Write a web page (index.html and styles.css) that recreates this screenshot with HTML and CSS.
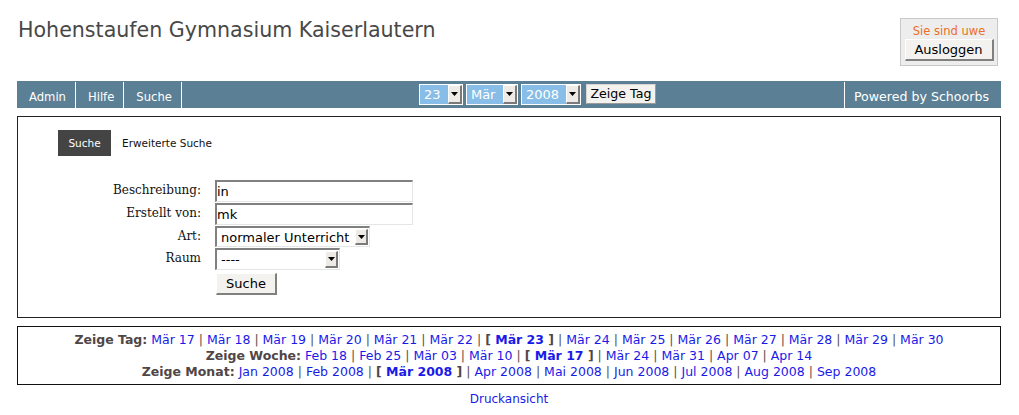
FILE: index.html
```html
<!DOCTYPE html>
<html lang="de">
<head>
<meta charset="utf-8">
<title>Hohenstaufen Gymnasium Kaiserlautern</title>
<link rel="stylesheet" href="styles.css">
</head>
<body>
<div class="page">
  <header class="header">
    <h1 class="title">Hohenstaufen Gymnasium Kaiserlautern</h1>
    <div class="login">
      <div class="login-name">Sie sind uwe</div>
      <button class="btn btn-logout" type="button">Ausloggen</button>
    </div>
  </header>

  <nav class="navbar">
    <ul class="nav-left">
      <li class="nav-item">Admin</li>
      <li class="nav-item">Hilfe</li>
      <li class="nav-item">Suche</li>
    </ul>
    <form class="datepick">
      <div class="dsel dsel-day"><span class="dsel-val">23</span><span class="dsel-arrow"><svg width="7" height="4" viewBox="0 0 7 4"><path d="M0 0h7L3.5 4z" fill="#000"/></svg></span></div>
      <div class="dsel dsel-month"><span class="dsel-val">Mär</span><span class="dsel-arrow"><svg width="7" height="4" viewBox="0 0 7 4"><path d="M0 0h7L3.5 4z" fill="#000"/></svg></span></div>
      <div class="dsel dsel-year"><span class="dsel-val">2008</span><span class="dsel-arrow"><svg width="7" height="4" viewBox="0 0 7 4"><path d="M0 0h7L3.5 4z" fill="#000"/></svg></span></div>
      <button class="btn btn-show" type="button">Zeige Tag</button>
    </form>
    <div class="powered">Powered by Schoorbs</div>
  </nav>

  <main class="panel">
    <div class="tabs">
      <span class="tab tab-active">Suche</span>
      <span class="tab">Erweiterte Suche</span>
    </div>
    <div class="search-form">
      <label class="f-label">Beschreibung:</label>
      <div class="f-field"><span class="inp inp-text">in</span></div>
      <label class="f-label">Erstellt von:</label>
      <div class="f-field"><span class="inp inp-text">mk</span></div>
      <label class="f-label">Art:</label>
      <div class="f-field"><span class="inp sel sel-art"><span class="sel-val">normaler Unterricht</span><span class="sel-arrow"><svg width="7" height="4" viewBox="0 0 7 4"><path d="M0 0h7L3.5 4z" fill="#000"/></svg></span></span></div>
      <label class="f-label">Raum</label>
      <div class="f-field"><span class="inp sel sel-room"><span class="sel-val">----</span><span class="sel-arrow"><svg width="7" height="4" viewBox="0 0 7 4"><path d="M0 0h7L3.5 4z" fill="#000"/></svg></span></span></div>
      <span class="f-label"></span>
      <div class="f-field"><button class="btn btn-search" type="button">Suche</button></div>
    </div>
  </main>

  <div class="datelinks">
    <div class="dl-row"><b class="dl-label">Zeige Tag:</b> <a>Mär 17</a> | <a>Mär 18</a> | <a>Mär 19</a> | <a>Mär 20</a> | <a>Mär 21</a> | <a>Mär 22</a> | <b class="cur">[ <a>Mär 23</a> ]</b> | <a>Mär 24</a> | <a>Mär 25</a> | <a>Mär 26</a> | <a>Mär 27</a> | <a>Mär 28</a> | <a>Mär 29</a> | <a>Mär 30</a></div>
    <div class="dl-row"><b class="dl-label">Zeige Woche:</b> <a>Feb 18</a> | <a>Feb 25</a> | <a>Mär 03</a> | <a>Mär 10</a> | <b class="cur">[ <a>Mär 17</a> ]</b> | <a>Mär 24</a> | <a>Mär 31</a> | <a>Apr 07</a> | <a>Apr 14</a></div>
    <div class="dl-row"><b class="dl-label">Zeige Monat:</b> <a>Jan 2008</a> | <a>Feb 2008</a> | <b class="cur">[ <a>Mär 2008</a> ]</b> | <a>Apr 2008</a> | <a>Mai 2008</a> | <a>Jun 2008</a> | <a>Jul 2008</a> | <a>Aug 2008</a> | <a>Sep 2008</a></div>
  </div>

  <div class="print"><a>Druckansicht</a></div>
</div>
</body>
</html>
```

FILE: styles.css
```css
* { box-sizing: border-box; }
html, body { margin: 0; padding: 0; background: #fff; }
body { font-family: "DejaVu Sans", Verdana, sans-serif; color: #000; }

.page { padding: 0 18px 0 17px; }

/* header */
.header { display: flex; justify-content: space-between; align-items: flex-start; height: 81px; }
.title {
  margin: 18px 0 0 1px;
  font-size: 20.6px; line-height: 24px; font-weight: normal; color: #484848;
}
.login {
  margin: 18px 3px 0 0;
  width: 98px; height: 48px;
  background: #ededed; border: 1px solid #c9c9c9;
  padding: 4px 4px 0 4px;
  display: flex; flex-direction: column; align-items: center;
}
.login-name { font-size: 11.5px; line-height: 16px; color: #ea6f28; }

.btn {
  font-family: "DejaVu Sans", Verdana, sans-serif;
  background: #f4f2ee; color: #000;
  border-style: solid; border-width: 1px 2px 2px 1px;
  border-color: #fff #808080 #808080 #fff;
  padding: 0; margin: 0; cursor: default;
}
.btn-logout { width: 89px; height: 22px; font-size: 13px; line-height: 18px; }

/* nav bar */
.navbar {
  display: flex; align-items: stretch;
  height: 27px; background: #5b7f95; color: #fff;
}
.nav-left { display: flex; list-style: none; margin: 0; padding: 0; }
.nav-item {
  font-size: 11.6px; line-height: 24px; padding: 3px 9px 0 12px;
  border-right: 1px solid #fff; margin-top: 1px;
}
.datepick {
  flex: 1; display: flex; justify-content: center; align-items: flex-start;
  padding: 3px 0 0 49px; margin: 0;
}
.dsel {
  display: flex; height: 21px; border: 1px solid #fff;
  background: #87bde6; margin-right: 3px;
}
.dsel-day { width: 44px; }
.dsel-month { width: 52px; }
.dsel-year { width: 60px; margin-right: 5px; }
.dsel-val { flex: 1; font-size: 13px; line-height: 19px; padding-left: 4px; color: #fff; }
.dsel-arrow, .sel-arrow {
  width: 14px; display: flex; align-items: center; justify-content: center;
  background: #eeebe6;
  border-style: solid; border-width: 1px 2px 2px 1px;
  border-color: #fff #7a7a7a #7a7a7a #fff;
}
.btn-show { width: 70px; height: 20px; font-size: 12.6px; line-height: 16px; border-width: 1px; border-color: #d8d6d2 #9a9a9a #9a9a9a #d8d6d2; }
.powered {
  font-size: 12.6px; line-height: 24px; padding: 3px 12px 0 9px;
  border-left: 1px solid #fff; margin-top: 1px;
}

/* panel */
.panel {
  margin-top: 8px; border: 1px solid #222;
  padding: 13px 0 22px 40px;
}
.tabs { display: flex; height: 26px; }
.tab { font-size: 10.5px; line-height: 26px; padding: 0 10px; color: #111; }
.tab-active { background: #444; color: #fff; width: 53px; text-align: center; padding: 0; margin-right: 1px; }

.search-form {
  margin: 24px 0 0 55px;
  display: grid; grid-template-columns: 88px auto; column-gap: 14px; row-gap: 1px;
  justify-content: start;
}
.f-label {
  font-family: "DejaVu Serif", Georgia, serif; font-size: 12px;
  text-align: right; line-height: 20px; color: #111; white-space: nowrap;
}
.f-field { display: flex; }
.inp {
  display: flex; height: 22px; background: #fff;
  border-style: solid; border-width: 2px 1px 1px 2px;
  border-color: #808080 #e6e6e6 #e6e6e6 #808080;
  font-size: 13px; line-height: 19px; color: #000;
}
.inp-text { width: 198px; }
.sel { height: 21px; padding: 0 1px 0 4px; align-items: stretch; }
.sel-art { width: 155px; }
.sel-room { width: 125px; height: 22px; }
.sel-val { flex: 1; white-space: nowrap; overflow: hidden; }
.sel-arrow { width: 13px; margin: 1px 0; }
.btn-search { margin: 2px 0 0 1px; width: 61px; height: 22px; font-size: 13px; line-height: 18px; }

/* date links */
.datelinks {
  margin-top: 8px; border: 1px solid #111;
  padding: 5px 0 4px; text-align: center;
  font-size: 12.5px; line-height: 16px; color: #5a5050;
}
.dl-label { color: #504646; }
.datelinks a { color: #1a1ae8; }
.cur { color: #504646; }
.cur a { color: #1a1ae8; }

.print { text-align: center; margin-top: 6px; font-size: 12px; line-height: 16px; }
.print a { color: #1a1ae8; }
```
